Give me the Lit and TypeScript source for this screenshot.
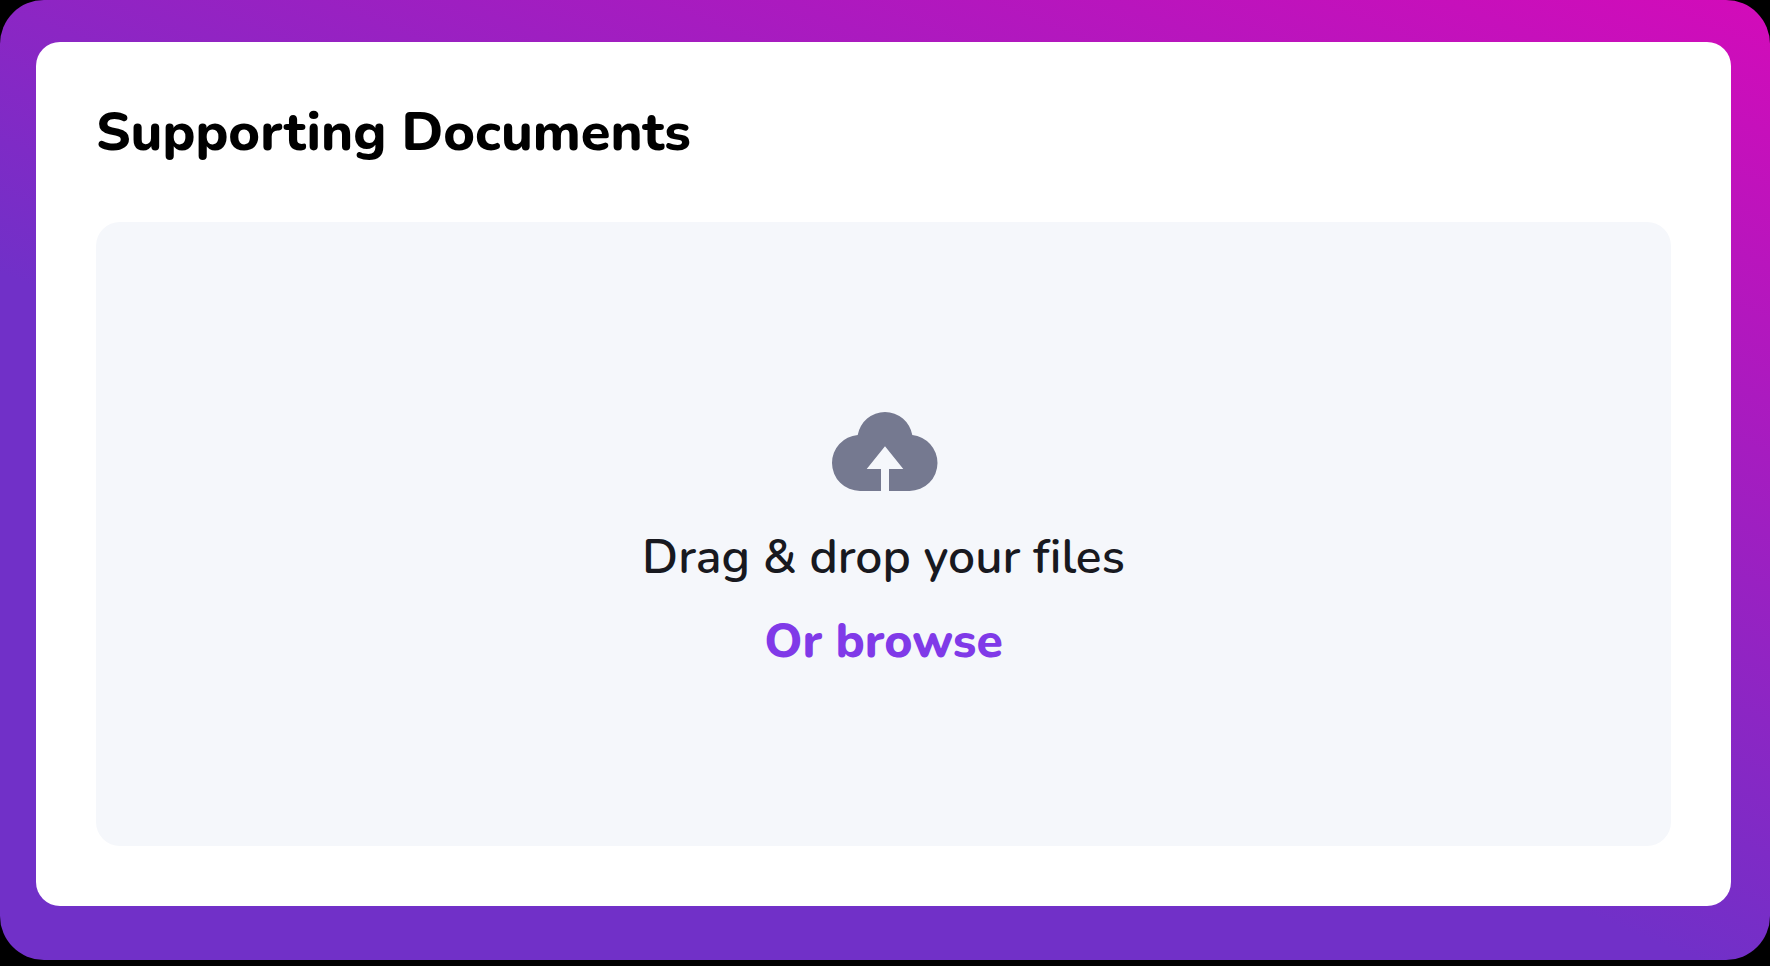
import { LitElement, html, css } from "lit";
import { customElement } from "lit/decorators.js";

@customElement("file-drop")
export class FileDrop extends LitElement {
  static styles = css`
    :host {
      display: flex;
    }
    .zone {
      flex: 1;
      display: flex;
      flex-direction: column;
      align-items: center;
      justify-content: center;
      padding-bottom: 2px;
      border-radius: 24px;
      background: #f5f7fb;
      color: #18191f;
      font-size: 48px;
      line-height: 60px;
    }
    .icon {
      width: 110px;
      height: 96px;
      margin-bottom: 36px;
      fill: #757990;
    }
    .hint {
      margin: 0 0 24px;
      font-weight: 600;
    }
    .browse {
      border: 0;
      padding: 0;
      background: none;
      color: #803ae8;
      font: inherit;
      font-weight: 800;
      cursor: pointer;
    }
  `;

  private browse() {
    this.renderRoot.querySelector<HTMLInputElement>("#files")?.click();
  }

  render() {
    return html`
      <div class="zone" @dragover=${(e: DragEvent) => e.preventDefault()}>
        <svg class="icon" viewBox="-3 -17 110 96" aria-hidden="true">
          <path
            d="M28 79A28 28 0 0 1 0 51A28 28 0 0 1 25.7 23A27.7 27.7 0 0 1 80.3 23A28 28 0 0 1 105.5 51A28 28 0 0 1 77.5 79H57V57H71.3L53 34.3L34.7 57H49V79Z"
          />
        </svg>
        <p class="hint">Drag &amp; drop your files</p>
        <button class="browse" type="button" @click=${this.browse}>Or browse</button>
        <input id="files" type="file" multiple hidden aria-label="Files" />
      </div>
    `;
  }
}

@customElement("app-root")
export class AppRoot extends LitElement {
  static styles = css`
    :host {
      display: flex;
      box-sizing: border-box;
      min-height: 100vh;
      padding-bottom: 6px;
      background: #000;
      font-family: Nunito, "Open Sans", sans-serif;
      font-variant-ligatures: none;
    }
    .frame {
      flex: 1;
      display: flex;
      padding: 42px 39px 54px 36px;
      border-radius: 44px;
      background: linear-gradient(22deg, #7130c8 41%, #d30bb9 100%);
    }
    .card {
      flex: 1;
      display: flex;
      flex-direction: column;
      gap: 60px;
      padding: 60px;
      border-radius: 24px;
      background: #fff;
    }
    .title {
      margin: 0;
      color: #000;
      font-size: 54px;
      font-weight: 800;
      line-height: 60px;
    }
    .drop {
      flex: 1;
    }
  `;

  render() {
    return html`
      <main class="frame">
        <section class="card" aria-labelledby="title">
          <h1 class="title" id="title">Supporting Documents</h1>
          <file-drop class="drop"></file-drop>
        </section>
      </main>
    `;
  }
}
